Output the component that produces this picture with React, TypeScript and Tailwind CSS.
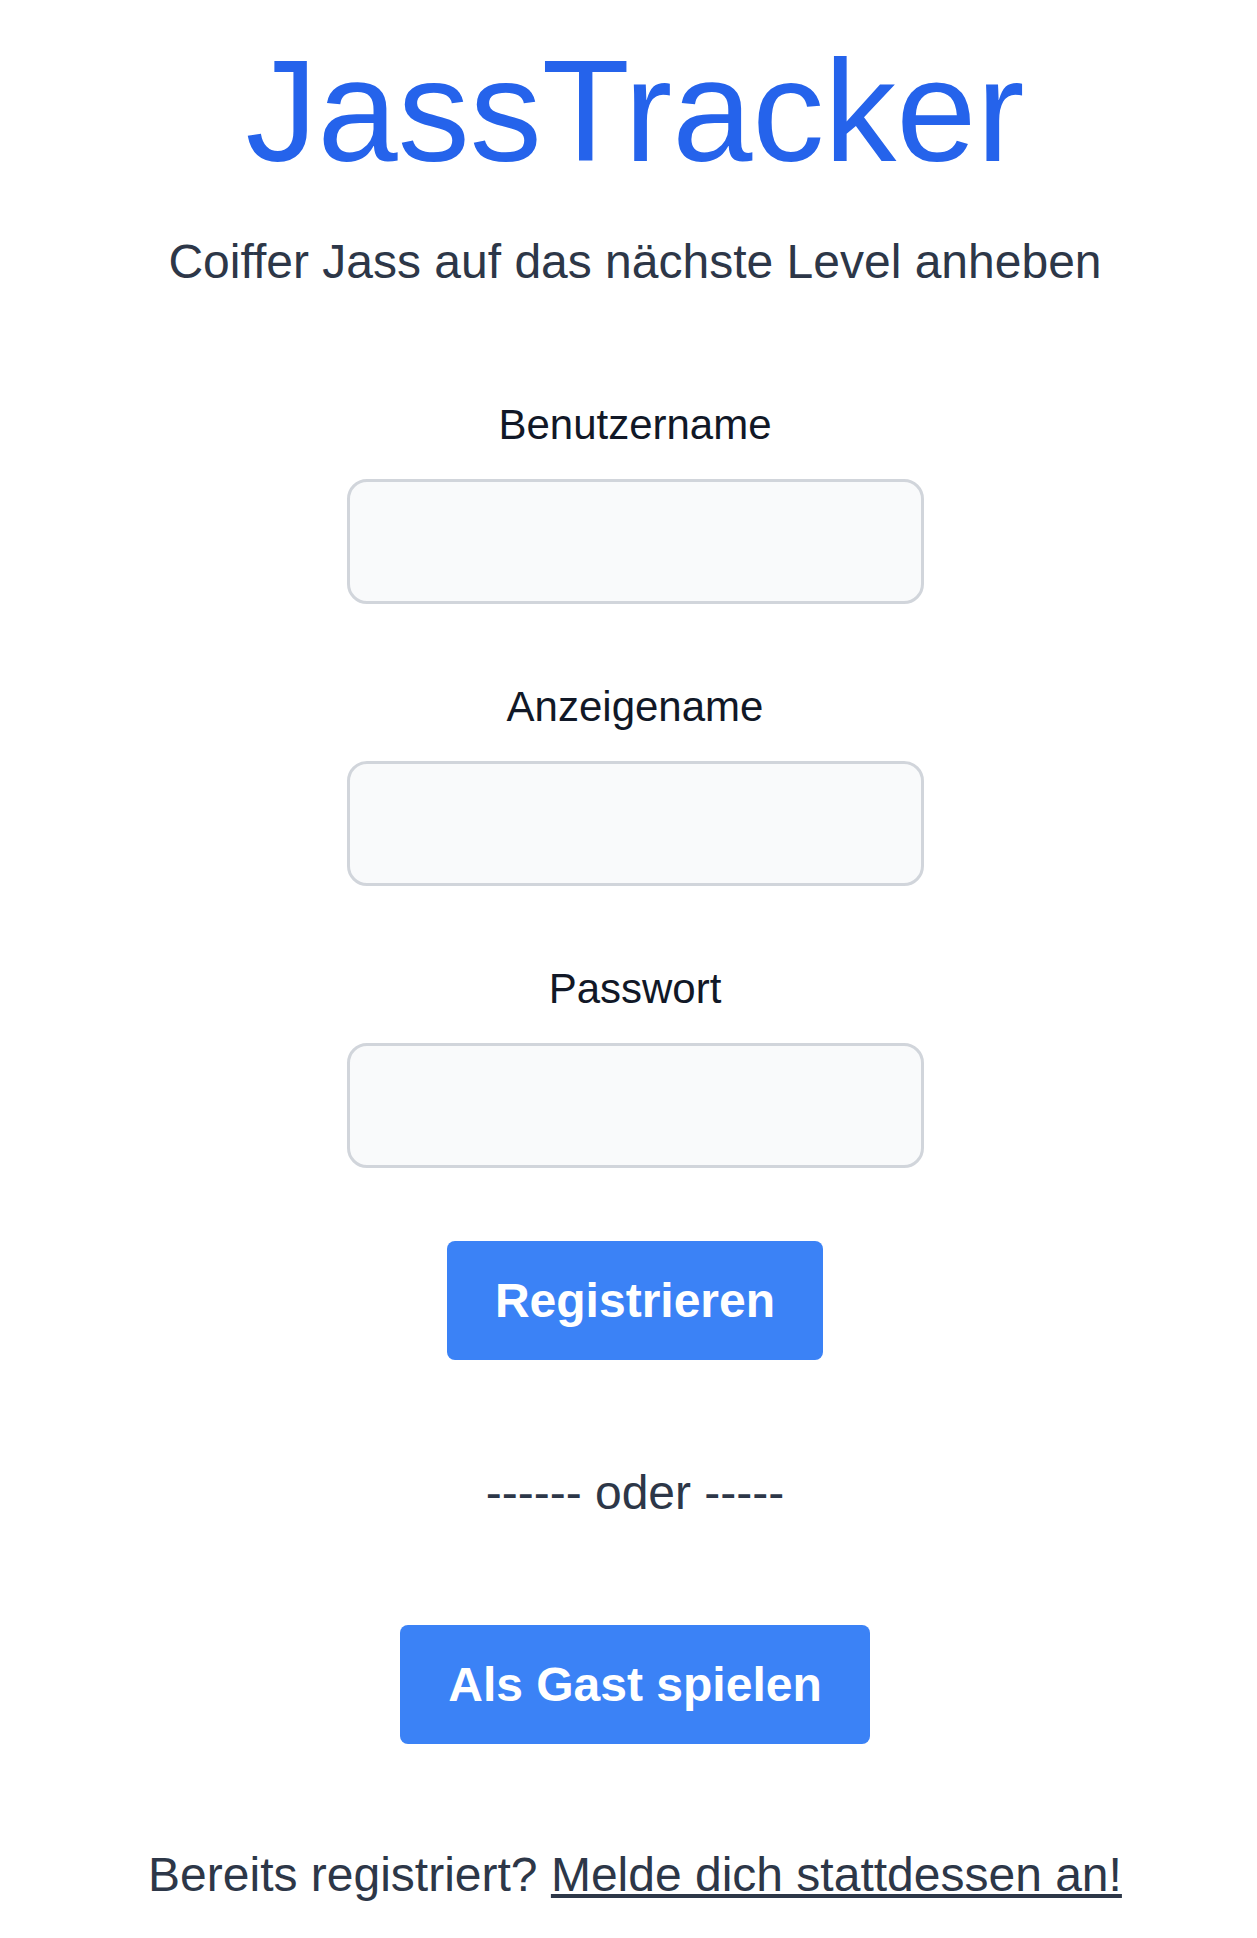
import React from "react";

export default function App() {
  return (
    <div
      className="min-h-[1938px] bg-white pl-[13px] text-center"
      style={{ fontFamily: '"Liberation Sans", Arial, sans-serif' }}
    >
      <div className="flex flex-col items-center">
        <h1 className="mt-[40px] text-[144px] leading-none font-normal text-[#2563eb]">
          JassTracker
        </h1>
        <p className="mt-[54px] text-[48px] leading-none text-[#2d3748]">
          Coiffer Jass auf das nächste Level anheben
        </p>

        <form className="flex flex-col items-center" onSubmit={(e) => e.preventDefault()}>
          <label className="mt-[118px] block text-[42px] leading-none text-[#111827]">
            Benutzername
          </label>
          <input
            type="text"
            className="mt-[33px] block h-[125px] w-[577px] rounded-[20px] border-[3px] border-[#d1d5db] bg-[#f9fafb] outline-none"
          />
          <label className="mt-[82px] block text-[42px] leading-none text-[#111827]">
            Anzeigename
          </label>
          <input
            type="text"
            className="mt-[33px] block h-[125px] w-[577px] rounded-[20px] border-[3px] border-[#d1d5db] bg-[#f9fafb] outline-none"
          />
          <label className="mt-[82px] block text-[42px] leading-none text-[#111827]">
            Passwort
          </label>
          <input
            type="password"
            className="mt-[33px] block h-[125px] w-[577px] rounded-[20px] border-[3px] border-[#d1d5db] bg-[#f9fafb] outline-none"
          />
          <button
            type="submit"
            className="mt-[73px] flex h-[119px] items-center justify-center rounded-lg bg-[#3b82f6] px-12 text-[48px] leading-none font-bold text-white"
          >
            Registrieren
          </button>
        </form>

        <p className="mt-[109px] text-[48px] leading-none text-[#2d3748]">------ oder -----</p>

        <button
          type="button"
          className="mt-[108px] flex h-[119px] items-center justify-center rounded-lg bg-[#3b82f6] px-12 text-[48px] leading-none font-bold text-white"
        >
          Als Gast spielen
        </button>

        <p className="mt-[107px] text-[48px] leading-none text-[#2d3748]">
          Bereits registriert?{" "}
          <a href="#" className="underline">
            Melde dich stattdessen an!
          </a>
        </p>
      </div>
    </div>
  );
}
